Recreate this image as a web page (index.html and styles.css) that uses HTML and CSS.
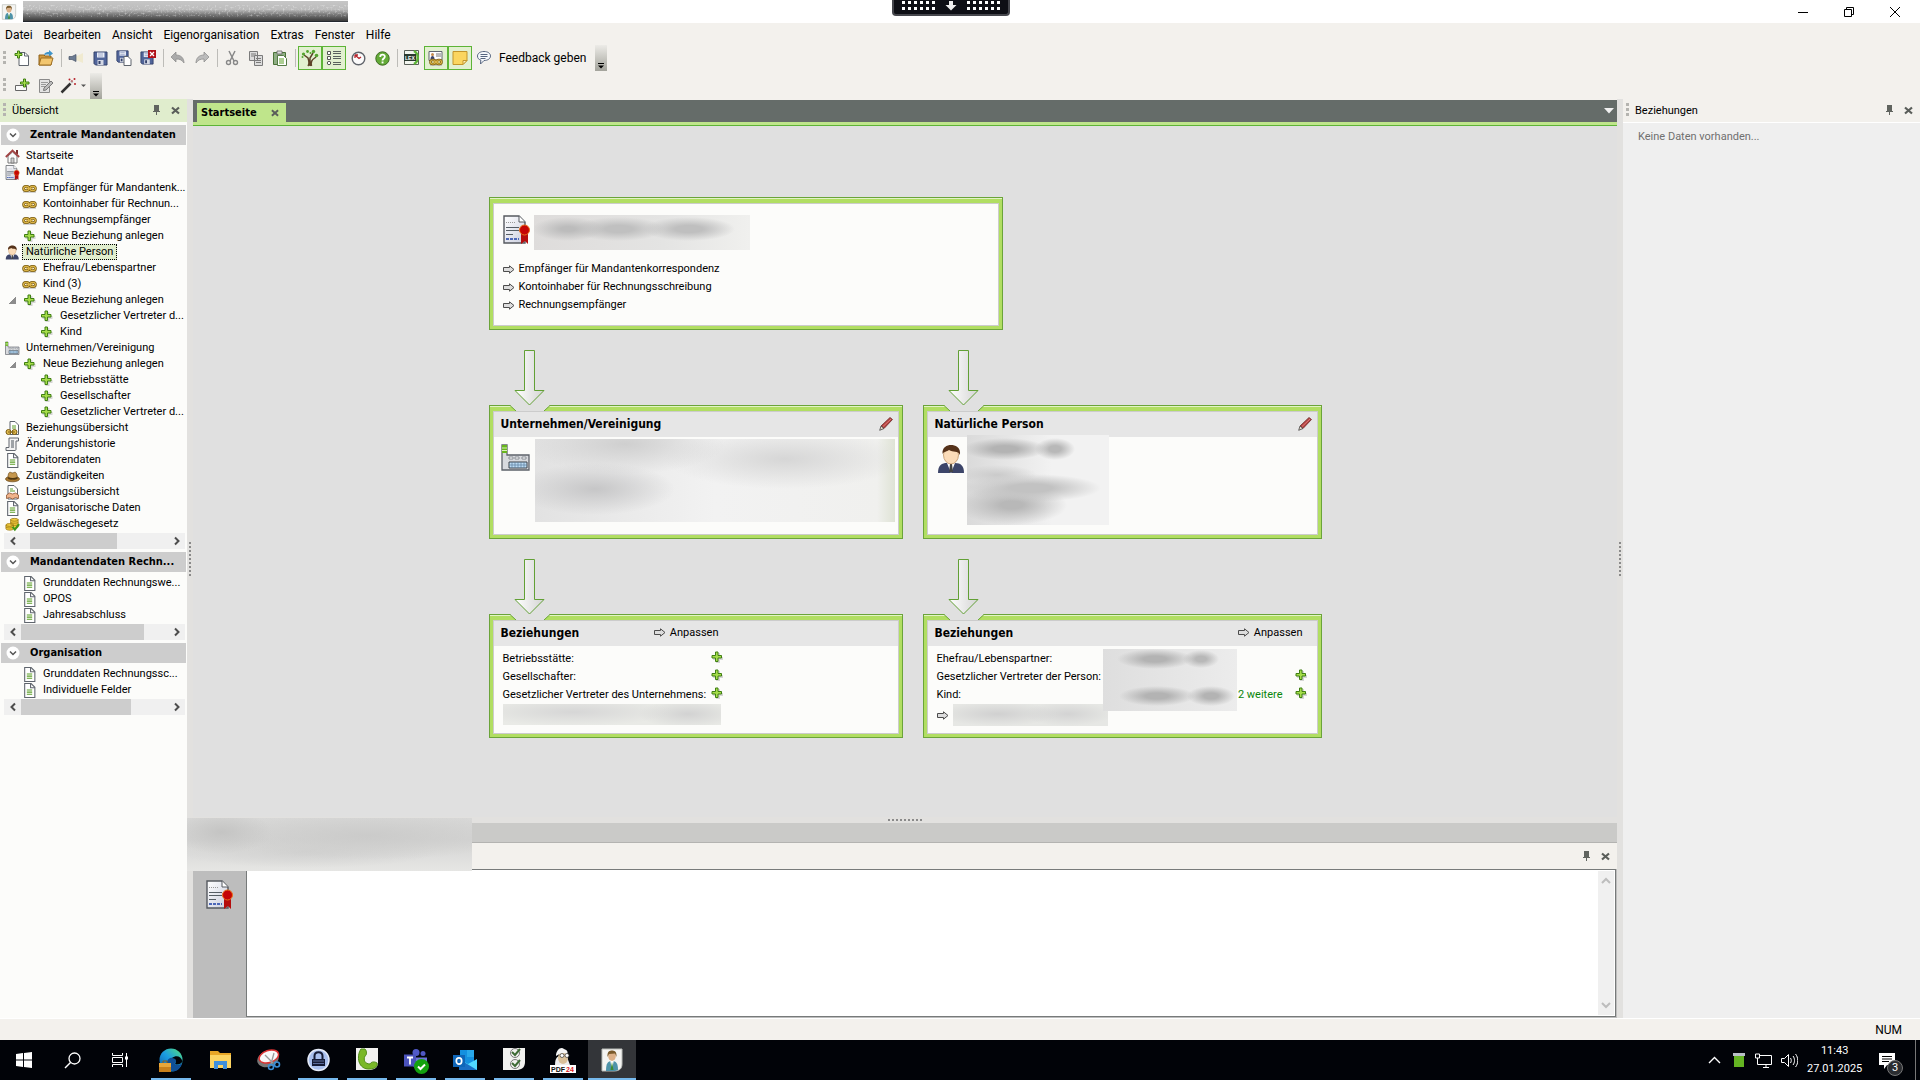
FILE: index.html
```html
<!DOCTYPE html>
<html lang="de">
<head>
<meta charset="utf-8">
<title>Zentrale Mandantendaten</title>
<link rel="stylesheet" href="styles.css">
</head>
<body>
<svg class="sprite" aria-hidden="true">
  <defs>
    <linearGradient id="g-paper" x1="0" y1="0" x2="1" y2="1"><stop offset="0" stop-color="#fff"/><stop offset="1" stop-color="#c9cddd"/></linearGradient>
    <linearGradient id="g-arrow" x1="0" x2="1"><stop offset="0" stop-color="#fff"/><stop offset="1" stop-color="#d4d4d4"/></linearGradient>
    <linearGradient id="g-edge" x1="0" y1="1" x2="1" y2="0"><stop offset="0" stop-color="#0c59a4"/><stop offset=".5" stop-color="#1b9de2"/><stop offset="1" stop-color="#54e07a"/></linearGradient>
  </defs>
  <symbol id="plus" viewBox="0 0 12 12"><path d="M5 2h4v4h3v3H9v3H5V9H2V6h3z" fill="#bbb" opacity=".6"/><path d="M4.500 1h2.500v3.500h3.500V7H7v3.500H4.500V7H1V4.500h3.500z" fill="#a6dd4a" stroke="#3f7f12"/></symbol>
  <symbol id="chain" viewBox="0 0 14 8"><path d="M1 7.500h12" stroke="#bbb" stroke-width=".8"/><g fill="none" stroke="#7a5c12" stroke-width="2.600"><rect x="1.500" y="2" width="5" height="4" rx="2"/><rect x="7.500" y="2" width="5" height="4" rx="2"/></g><g fill="none" stroke="#dcb548" stroke-width="1.200"><rect x="1.500" y="2" width="5" height="4" rx="2"/><rect x="7.500" y="2" width="5" height="4" rx="2"/><path d="M4 4h6"/></g></symbol>
  <symbol id="doc" viewBox="0 0 11 14"><path d="M1 .5h6l3.500 3.500v9.500H1z" fill="#fff" stroke="#5f656d"/><path d="M6.500.5v4h4" fill="none" stroke="#5f656d"/><path d="M3 6.500h5M3 8.500h5M3 10.500h5" stroke="#5b9e27"/></symbol>
  <symbol id="cert" viewBox="0 0 27 29"><path d="M1 1h15l6 6v21H1z" fill="url(#g-paper)" stroke="#55595f" stroke-width="1.400"/><path d="M16 1v6h6" fill="#fff" stroke="#55595f"/><path d="M3 7.500h9" stroke="#999" stroke-dasharray="1 1"/><path d="M3 12.500h13M3 15.500h13M3 19.500h7" stroke="#555d64" stroke-width="1.200"/><path d="M3 24h13" stroke="#4c67b8" stroke-width="2" stroke-dasharray="3 1"/><path d="M18 18h7v11l-3-3-4 3z" fill="#b50d0d"/><circle cx="21.500" cy="15" r="5" fill="#c50505" stroke="#e8711a"/></symbol>
  <symbol id="house" viewBox="0 0 15 15"><path d="M3 7v7h9V7L7.500 3z" fill="#fafafa" stroke="#777"/><path d="M11 1h2v4h-2z" fill="#7b2d2d"/><path d="M.8 8L7.500 1.500 14.200 8" fill="none" stroke="#a24444" stroke-width="1.800"/><path d="M6 9h3v5H6z" fill="#ccc" stroke="#666" stroke-width=".7"/></symbol>
  <symbol id="person" viewBox="0 0 29 30"><path d="M1 29c0-8 4-10 9-10h8c6 0 9 3 9 10z" fill="#3d4569"/><path d="M10 19h8l-4 10z" fill="#fff"/><path d="M13 20h2l1 8h-4z" fill="#444"/><ellipse cx="14" cy="11" rx="7.500" ry="9" fill="#fbdcb9" stroke="#a9733c" stroke-width=".6"/><path d="M5.500 10C5 3 10 1 14 1s10 2 9 10c-2-5-7-2-11-5-2 2-5 1-6.500 4z" fill="#55321a"/></symbol>
  <symbol id="factory" viewBox="0 0 30 28"><path d="M1 1h5v10h22v15H1z" fill="#d8dade" stroke="#5c6169" stroke-width="1.300"/><path d="M1 1h5v8H1z" fill="#67b51c"/><path d="M1 4h5M1 6.500h5" stroke="#d9f2b8"/><path d="M8 13h4v2H8zM14 13h4v2h-4zM21 13h4v2h-4z" fill="#fff" stroke="#686d75" stroke-width=".7"/><path d="M8 18h18v6H8z" fill="#bcdcf5" stroke="#3d434b"/><path d="M11 18v6M14 18v6M17 18v6M20 18v6M23 18v6M8 21h18" stroke="#5d7f9d" stroke-width=".7"/></symbol>
  <symbol id="docchain" viewBox="0 0 15 15"><path d="M5 .5h5l3.500 3.500v9.500H5z" fill="#fff" stroke="#5f656d"/><path d="M7 5h4M7 7h4" stroke="#5b9e27"/><g fill="#e2bc4e" stroke="#7a5c12"><circle cx="3.500" cy="11" r="2.500"/><circle cx="9.500" cy="11" r="2.500"/><path d="M3 11h7"/></g></symbol>
  <symbol id="scroll" viewBox="0 0 15 15"><path d="M4 1h9.500v3H11v8.500c0 1-1 1-1 1H1v-3h3z" fill="#f3f3f3" stroke="#62676e"/><path d="M6 4h3M6 6h3M6 8h3M6 10h3" stroke="#4a525b"/></symbol>
  <symbol id="hat" viewBox="0 0 15 12"><ellipse cx="7.500" cy="8.500" rx="7" ry="2.800" fill="#a8782f" stroke="#6c4814" stroke-width=".7"/><path d="M3 8c0-5 1-7 3-6 1 .6 2 .6 3 0 2-1 3 1 3.500 6-3 1.500-7 1.500-9.500 0z" fill="#c5974d" stroke="#6c4814" stroke-width=".7"/><path d="M3.200 6.500c3 1.200 6 1.200 9 0v1.700c-3 1.200-6 1.200-9 0z" fill="#4f3711"/></symbol>
  <symbol id="dochands" viewBox="0 0 15 15"><path d="M3 .5h6l3.500 3.500v10H3z" fill="#fff" stroke="#5f656d"/><path d="M5 4h3M5 6h5" stroke="#5b9e27"/><path d="M1.500 13.500V10l3-2 3 1 3-1 3 2v3.500l-3-1-3 1.500-3-1.500z" fill="#f0b48b" stroke="#8e5632" stroke-width=".8"/></symbol>
  <symbol id="coins" viewBox="0 0 16 15"><g fill="#f2cc3d" stroke="#97740f" stroke-width=".8"><path d="M6 2v8c0 2 8 2 8 0V2z"/><ellipse cx="10" cy="2.500" rx="4" ry="1.500"/><path d="M1 8v4c0 2 8 2 8 0V8z"/><ellipse cx="5" cy="8" rx="4" ry="1.500"/><path d="M6 5c0 1.500 8 1.500 8 0M6 7.500c0 1 8 1.500 8 0M1 10c0 1.500 8 1.500 8 0" fill="none"/></g><path d="M8 10l2.500 3L15 7" fill="none" stroke="#3f9717" stroke-width="2.200"/></symbol>
  <symbol id="go" viewBox="0 0 12 9"><path d="M.5 2.500h6V.8L11 4.500 6.500 8.200V6.500h-6z" fill="#ddd" stroke="#4c4c4c"/></symbol>
  <symbol id="pencil" viewBox="0 0 15 15"><path d="M2 10L11 1.500l2.500 2L5 12.500z" fill="#b4403f" stroke="#6d2c2b" stroke-width=".8"/><path d="M2 10l3 2.500-4.300 1.800z" fill="#e8d9c8" stroke="#444" stroke-width=".8"/><path d="M4 10.500l8-7.500" stroke="#e58e8a" stroke-width=".8"/></symbol>
  <symbol id="pin" viewBox="0 0 9 11"><path d="M2 0h5v6h1v1H5v3H4V7H1V6h1z" fill="#60645f"/></symbol>
  <symbol id="close" viewBox="0 0 9 9"><path d="M1 1.500l7 6M8 1.500l-7 6" stroke="#5a5e5a" stroke-width="2.200"/></symbol>
  <symbol id="circle-down" viewBox="0 0 14 14"><circle cx="7" cy="7" r="6.500" fill="#fff"/><path d="M4 5.500l3 3 3-3" fill="none" stroke="#555" stroke-width="1.500"/></symbol>
  <symbol id="left" viewBox="0 0 8 10"><path d="M6 1.500L2.500 5 6 8.500" fill="none" stroke="#4d4d4d" stroke-width="2"/></symbol>
  <symbol id="right" viewBox="0 0 8 10"><path d="M2 1.500L5.500 5 2 8.500" fill="none" stroke="#4d4d4d" stroke-width="2"/></symbol>
  <symbol id="flow" viewBox="0 0 31 56"><path d="M10.500.5h10v40h9.500L15.500 55 1 40.500h9.500z" fill="url(#g-arrow)" stroke="#62a035"/></symbol>
  <symbol id="notch" viewBox="0 0 40 6"><path d="M0 0h40l-6 6H6z" fill="#e0e0e0"/><path d="M0 .5L6 6M40 .5L34 6" stroke="#6ba43a"/></symbol>
  <symbol id="overflow" viewBox="0 0 12 26"><path d="M3 18.500h6" stroke="#000"/><path d="M3 20.500h6l-3 3z"/></symbol>
  <symbol id="floppy" viewBox="0 0 15 15"><path d="M1 1h13v13H2.500L1 12.500z" fill="#51659a" stroke="#34426b"/><path d="M4 1.500h7.500v5H4z" fill="#e9edf6"/><path d="M5 3h5M5 5h5" stroke="#8d9ac0" stroke-width=".8"/><path d="M4.500 9h6v5h-6z" fill="#d4d8e4"/><path d="M5.500 10h2v3h-2z" fill="#34426b"/></symbol>
  <symbol id="advisor" viewBox="0 0 22 24"><path d="M1 1h20v15c0 5-3 7-8 7H1z" fill="#f4f4f2" stroke="#b9bcb8"/><path d="M5 23c0-8 2-10 6-10s6 2 6 9c-2 1-4 1-5 1z" fill="#4f93a9"/><path d="M9 12h4l-2 9z" fill="#fff"/><path d="M11 14l1.500 8h-3z" fill="#3e8b2e"/><ellipse cx="11" cy="8" rx="3.800" ry="5" fill="#dcb088"/><path d="M6.500 9C6 3 9 2.500 11 2.500S16 3 15.500 9L14 5.500 8 6z" fill="#7a5a2b"/></symbol>
</svg>

<header class="titlebar">
  <svg class="app-icon"><use href="#advisor"/></svg>
  <svg class="title-mask" aria-hidden="true" preserveAspectRatio="none">
    <defs>
      <linearGradient id="g-mask" x1="0" y1="0" x2="0" y2="1"><stop offset="0" stop-color="#c6c6c6"/><stop offset=".4" stop-color="#bcbcbc"/><stop offset=".65" stop-color="#777"/><stop offset=".95" stop-color="#3a3a3a"/><stop offset="1" stop-color="#0c1420"/></linearGradient>
      <filter id="f-noise"><feTurbulence type="fractalNoise" baseFrequency=".5" numOctaves="2"/><feColorMatrix values="0 0 0 0 1  0 0 0 0 1  0 0 0 0 1  3 0 0 0 -1.500"/></filter>
    </defs>
    <rect width="100%" height="100%" fill="url(#g-mask)"/>
    <rect width="100%" height="10" y="5" filter="url(#f-noise)" opacity=".4"/>
  </svg>
  <div class="window-buttons">
    <button type="button" aria-label="Minimieren"><svg width="12" height="12"><path d="M1 6.500h10" stroke="#000"/></svg></button>
    <button type="button" aria-label="Verkleinern"><svg width="12" height="12"><path d="M1.500 3.500h7v7h-7zM3.500 3.500v-2h7v7h-2" fill="none" stroke="#000"/></svg></button>
    <button type="button" aria-label="Schließen"><svg width="12" height="12"><path d="M1 1l10 10M11 1L1 11" stroke="#000"/></svg></button>
  </div>
  <div class="session-pill"><i class="dots"></i><svg width="12" height="10"><path d="M4 0h4v4h3.500L6 9.500.5 4H4z" fill="#eee"/></svg><i class="dots"></i></div>
</header>

<nav class="menu" aria-label="Menü">
  <a href="#">Datei</a><a href="#">Bearbeiten</a><a href="#">Ansicht</a><a href="#">Eigenorganisation</a><a href="#">Extras</a><a href="#">Fenster</a><a href="#">Hilfe</a>
</nav>

<div class="toolbar">
  <i class="grip"></i>
  <button class="tool" type="button" aria-label="Neu"><svg width="16" height="16"><path d="M5 2.500h6l3.500 3.500v9.500H5z" fill="#fff" stroke="#5f656d"/><path d="M10.500 2.500V6h4" fill="none" stroke="#5f656d"/><path d="M3.500 1h2v2.500H8v2H5.500V8h-2V5.500H1v-2h2.500z" fill="#a6dd4a" stroke="#3f7f12"/></svg></button>
  <button class="tool" type="button" aria-label="Öffnen"><svg width="16" height="16"><path d="M1 5h5l1 1h6v9H1z" fill="#d39a3d" stroke="#8d601b"/><path d="M3 8h12l-2 7H1z" fill="#f2c66f" stroke="#9d6e22"/><path d="M6 5c1-3 3-3 5-3V0l4 3.500-4 3V4.500c-2 0-3 0-5 .5z" fill="#3f94c9"/></svg></button>
  <i class="sep"></i>
  <button class="tool" type="button" aria-label="Mitteilung"><svg width="16" height="16"><path d="M7 7l8-4v10L7 9.500z" fill="#f0ead0"/><path d="M1 6.500h3L8 4.500v7L4 9.500H1z" fill="#6c7b93" stroke="#495469" stroke-width=".7"/></svg></button>
  <button class="tool" type="button" aria-label="Speichern"><svg width="15" height="15"><use href="#floppy"/></svg></button>
  <button class="tool" type="button" aria-label="Speichern und neu"><svg width="16" height="16"><use href="#floppy" width="13" height="13"/><path d="M8 6.500h4l3 3v6H8z" fill="#fff" stroke="#5f656d"/></svg></button>
  <button class="tool" type="button" aria-label="Speichern und schließen"><svg width="16" height="16"><use href="#floppy" y="1" width="14" height="14"/><path d="M8 0h8v8H8z" fill="#b11018"/><path d="M10 2l4 4M14 2l-4 4" stroke="#fff" stroke-width="1.300"/></svg></button>
  <i class="sep"></i>
  <button class="tool" type="button" aria-label="Rückgängig"><svg width="16" height="16"><path d="M1 7l5-5v3c5 0 8 3 8 8-2-3-4-4-8-4v3z" fill="#aaa" stroke="#888" stroke-width=".7"/></svg></button>
  <button class="tool" type="button" aria-label="Wiederholen"><svg width="16" height="16"><path d="M15 7l-5-5v3c-5 0-8 3-8 8 2-3 4-4 8-4v3z" fill="#bbb" stroke="#888" stroke-width=".7"/></svg></button>
  <i class="sep"></i>
  <button class="tool" type="button" aria-label="Ausschneiden"><svg width="16" height="16"><path d="M5 1l5 10M11 1L6 11" stroke="#888" stroke-width="1.500"/><g fill="none" stroke="#888" stroke-width="1.400"><circle cx="4.500" cy="12.500" r="2"/><circle cx="11.500" cy="12.500" r="2"/></g></svg></button>
  <button class="tool" type="button" aria-label="Kopieren"><svg width="16" height="16"><g fill="#dcdcdc" stroke="#7b7b7b"><path d="M1.500 1.500h8v9h-8zM6.500 5.500h8v10h-8z"/></g><path d="M3 4h5M3 6h3M8 8.500h5M8 10.500h5M8 12.500h5" stroke="#7b7b7b"/></svg></button>
  <button class="tool" type="button" aria-label="Einfügen"><svg width="16" height="16"><path d="M1.500 2.500h12v12h-12z" fill="#8fae84" stroke="#4a7338"/><path d="M5 1h5v3H5z" fill="#ddd" stroke="#666" stroke-width=".8"/><path d="M5.500 5.500h6l3 3v7h-9z" fill="#fff" stroke="#557a46"/><path d="M7 9h5M7 11h5M7 13h5" stroke="#5b9e27"/></svg></button>
  <i class="sep"></i>
  <button class="tool on" type="button" aria-label="Übersichtsbaum"><svg width="18" height="18"><path d="M7 17c1.500-2 1-5 0-8L3 6M9 17V9l3-5M10.500 17c-1-4 0-6 4.500-9" stroke="#5c4327" stroke-width="1.500" fill="none"/><g fill="#53a32c"><circle cx="2.500" cy="5" r="1.600"/><circle cx="6.500" cy="2.500" r="1.400"/><circle cx="9.500" cy="4" r="1"/><circle cx="12.500" cy="2.500" r="1.700"/><circle cx="15.500" cy="6.500" r="1.800"/><circle cx="1.500" cy="8" r="1"/></g></svg></button>
  <button class="tool on" type="button" aria-label="Liste"><svg width="16" height="16"><path d="M1.500 1.500h3v3h-3zM1.500 6.500h3v3h-3z" fill="#fff" stroke="#555"/><circle cx="3" cy="13" r="1.700" fill="#fff" stroke="#555"/><path d="M7 1.500h8M7 3.500h8M7 6.500h8M7 8.500h8M7 12.500h8M7 14.500h8" stroke="#59625d"/></svg></button>
  <button class="tool" type="button" aria-label="Verlauf"><svg width="15" height="15"><circle cx="7.500" cy="7.500" r="6.300" fill="#fbfbfb" stroke="#60646b" stroke-width="1.400"/><path d="M4 4l4 3.500L10 6M4 4v3M4 4h3" fill="none" stroke="#b7222a" stroke-width="1.300"/></svg></button>
  <button class="tool" type="button" aria-label="Hilfe"><svg width="15" height="15"><circle cx="7.500" cy="7.500" r="6.700" fill="#63ab37" stroke="#3f6b24"/><path d="M5.200 6c0-3.200 4.800-3 4.600-.3C9.700 7.500 7.500 7.500 7.500 9.500" fill="none" stroke="#fff" stroke-width="1.800"/><path d="M6.600 10.500h1.900v1.900H6.600z" fill="#fff"/></svg></button>
  <i class="sep"></i>
  <button class="tool" type="button" aria-label="LEX"><svg width="16" height="16"><path d="M.5.5h14v14H.5z" fill="#f3f6f0" stroke="#5a6058"/><path d="M10 1c5 3 5 10 0 13" stroke="#5db437" stroke-width="2.500" fill="none"/><path d="M0 4h12v7H0z" fill="#2b3a2f"/><text class="lex" x="1" y="10">LEX</text></svg></button>
  <button class="tool on" type="button" aria-label="Beziehungen"><svg width="16" height="16"><path d="M1 1.500h13v9H1z" fill="#fff" stroke="#5f656d"/><circle cx="4.500" cy="4.500" r="1.500" fill="#c58c4c"/><path d="M2.500 9c0-4 4-4 4 0z" fill="#3d4569"/><path d="M8 4h5M8 6h5" stroke="#777"/><use href="#chain" x="1" y="8" width="14" height="8"/></svg></button>
  <button class="tool on" type="button" aria-label="Notiz"><svg width="16" height="16"><path d="M1 1.500h14v9l-4 4H1z" fill="#fbd65f" stroke="#c2952b"/><path d="M15 10.500h-4v4z" fill="#fff1b5" stroke="#c2952b"/></svg></button>
  <button class="tool-text" type="button"><svg width="16" height="16"><path d="M8 1.500c4 0 6.500 2 6.500 4.500S12 10.500 8 10.500L4.500 14l.3-4C2.500 9.500 1.500 8 1.500 6c0-2.500 2.500-4.500 6.500-4.500z" fill="#f6f9fd" stroke="#56657f"/><path d="M4.500 4.500h7M4.500 6.500h7M4.500 8.500h5" stroke="#56657f"/></svg>Feedback geben</button>
  <button class="overflow" type="button" aria-label="Weitere"><svg width="12" height="26"><use href="#overflow"/></svg></button>
</div>
<div class="toolbar second">
  <i class="grip"></i>
  <button class="tool" type="button" aria-label="Anlegen"><svg width="16" height="16"><path d="M1.500 7.500h11v5h-11z" fill="#fafafa" stroke="#666"/><path d="M9.500 1h2v3H15v2h-3.500v3h-2V6H6.500V4h3z" fill="#a6dd4a" stroke="#3f7f12"/></svg></button>
  <button class="tool" type="button" aria-label="Bearbeiten"><svg width="16" height="16"><path d="M1.500 1.500h10v13h-10z" fill="#e3e3e3" stroke="#8a8a8a"/><path d="M3 4.500h7M3 6.500h5M3 8.500h4" stroke="#999"/><path d="M5.500 12.500L6 10l7-7 2 2-7 7z" fill="#bbb" stroke="#777"/></svg></button>
  <button class="tool wide" type="button" aria-label="Assistent"><svg width="28" height="16"><path d="M1.500 14.500l9-9" stroke="#333" stroke-width="2.500"/><path d="M11 4.500l1.500-1.500" stroke="#bbb" stroke-width="2.500"/><g fill="#b7222a"><circle cx="9.500" cy="1.500" r="1"/><circle cx="14.500" cy="1" r="1"/><circle cx="15" cy="6" r="1"/><circle cx="12" cy="3" r=".8"/></g><path d="M21 6.500h5l-2.500 2.500z" fill="#555"/></svg></button>
  <button class="overflow" type="button" aria-label="Weitere"><svg width="12" height="26"><use href="#overflow"/></svg></button>
</div>

<div class="workspace">
  <aside class="overview">
    <div class="pane-head green"><i class="grip"></i><h2>Übersicht</h2><button type="button" aria-label="Anheften"><svg width="9" height="11"><use href="#pin"/></svg></button><button type="button" aria-label="Schließen"><svg width="9" height="9"><use href="#close"/></svg></button></div>

    <section class="group">
      <button class="group-head" type="button"><svg width="14" height="14"><use href="#circle-down"/></svg>Zentrale Mandantendaten</button>
      <ul class="tree">
        <li><svg><use href="#house"/></svg><a href="#">Startseite</a></li>
        <li><svg><use href="#cert"/></svg><a href="#">Mandat</a></li>
        <li class="l1"><svg><use href="#chain"/></svg><a href="#">Empfänger für Mandantenk...</a></li>
        <li class="l1"><svg><use href="#chain"/></svg><a href="#">Kontoinhaber für Rechnun...</a></li>
        <li class="l1"><svg><use href="#chain"/></svg><a href="#">Rechnungsempfänger</a></li>
        <li class="l1 add"><svg><use href="#plus"/></svg><a href="#">Neue Beziehung anlegen</a></li>
        <li><svg><use href="#person"/></svg><a class="selected" href="#">Natürliche Person</a></li>
        <li class="l1"><svg><use href="#chain"/></svg><a href="#">Ehefrau/Lebenspartner</a></li>
        <li class="l1"><svg><use href="#chain"/></svg><a href="#">Kind (3)</a></li>
        <li class="l1 add open"><svg><use href="#plus"/></svg><a href="#">Neue Beziehung anlegen</a></li>
        <li class="l2 add"><svg><use href="#plus"/></svg><a href="#">Gesetzlicher Vertreter d...</a></li>
        <li class="l2 add"><svg><use href="#plus"/></svg><a href="#">Kind</a></li>
        <li><svg><use href="#factory"/></svg><a href="#">Unternehmen/Vereinigung</a></li>
        <li class="l1 add open"><svg><use href="#plus"/></svg><a href="#">Neue Beziehung anlegen</a></li>
        <li class="l2 add"><svg><use href="#plus"/></svg><a href="#">Betriebsstätte</a></li>
        <li class="l2 add"><svg><use href="#plus"/></svg><a href="#">Gesellschafter</a></li>
        <li class="l2 add"><svg><use href="#plus"/></svg><a href="#">Gesetzlicher Vertreter d...</a></li>
        <li><svg><use href="#docchain"/></svg><a href="#">Beziehungsübersicht</a></li>
        <li><svg><use href="#scroll"/></svg><a href="#">Änderungshistorie</a></li>
        <li><svg><use href="#doc"/></svg><a href="#">Debitorendaten</a></li>
        <li><svg><use href="#hat"/></svg><a href="#">Zuständigkeiten</a></li>
        <li><svg><use href="#dochands"/></svg><a href="#">Leistungsübersicht</a></li>
        <li><svg><use href="#doc"/></svg><a href="#">Organisatorische Daten</a></li>
        <li><svg><use href="#coins"/></svg><a href="#">Geldwäschegesetz</a></li>
      </ul>
      <div class="hscroll"><button type="button" aria-label="Nach links"><svg width="8" height="10"><use href="#left"/></svg></button><div class="track"><div class="thumb first"></div></div><button type="button" aria-label="Nach rechts"><svg width="8" height="10"><use href="#right"/></svg></button></div>
    </section>

    <section class="group">
      <button class="group-head" type="button"><svg width="14" height="14"><use href="#circle-down"/></svg>Mandantendaten Rechn...</button>
      <ul class="tree">
        <li class="l1"><svg><use href="#doc"/></svg><a href="#">Grunddaten Rechnungswe...</a></li>
        <li class="l1"><svg><use href="#doc"/></svg><a href="#">OPOS</a></li>
        <li class="l1"><svg><use href="#doc"/></svg><a href="#">Jahresabschluss</a></li>
      </ul>
      <div class="hscroll"><button type="button" aria-label="Nach links"><svg width="8" height="10"><use href="#left"/></svg></button><div class="track"><div class="thumb second-thumb"></div></div><button type="button" aria-label="Nach rechts"><svg width="8" height="10"><use href="#right"/></svg></button></div>
    </section>

    <section class="group">
      <button class="group-head" type="button"><svg width="14" height="14"><use href="#circle-down"/></svg>Organisation</button>
      <ul class="tree">
        <li class="l1"><svg><use href="#doc"/></svg><a href="#">Grunddaten Rechnungssc...</a></li>
        <li class="l1"><svg><use href="#doc"/></svg><a href="#">Individuelle Felder</a></li>
      </ul>
      <div class="hscroll"><button type="button" aria-label="Nach links"><svg width="8" height="10"><use href="#left"/></svg></button><div class="track"><div class="thumb third-thumb"></div></div><button type="button" aria-label="Nach rechts"><svg width="8" height="10"><use href="#right"/></svg></button></div>
    </section>
  </aside>

  <div class="splitter"><i></i></div>

  <main class="center">
    <div class="tabs">
      <div class="tab"><a href="#">Startseite</a><button type="button" aria-label="Tab schließen"><svg width="8" height="8" viewBox="0 0 9 9"><use href="#close"/></svg></button></div>
      <button class="tab-list" type="button" aria-label="Tabliste"><svg width="10" height="6"><path d="M0 0h10L5 5.500z" fill="#f1f1f1"/></svg></button>
    </div>

    <div class="canvas">
      <div class="board">
        <article class="card mandate">
          <div class="card-body">
            <div class="who"><svg width="27" height="29"><use href="#cert"/></svg><span class="mask m1"></span></div>
            <a class="go" href="#"><svg><use href="#go"/></svg>Empfänger für Mandantenkorrespondenz</a>
            <a class="go" href="#"><svg><use href="#go"/></svg>Kontoinhaber für Rechnungsschreibung</a>
            <a class="go" href="#"><svg><use href="#go"/></svg>Rechnungsempfänger</a>
          </div>
        </article>

        <svg class="flow"><use href="#flow"/></svg>
        <svg class="flow"><use href="#flow"/></svg>

        <article class="card">
          <svg class="notch"><use href="#notch"/></svg>
          <header class="card-head"><h3>Unternehmen/Vereinigung</h3><button type="button" aria-label="Bearbeiten"><svg width="15" height="15"><use href="#pencil"/></svg></button></header>
          <div class="card-body entity"><svg width="30" height="28"><use href="#factory"/></svg><span class="mask m2"></span></div>
        </article>
        <article class="card">
          <svg class="notch"><use href="#notch"/></svg>
          <header class="card-head"><h3>Natürliche Person</h3><button type="button" aria-label="Bearbeiten"><svg width="15" height="15"><use href="#pencil"/></svg></button></header>
          <div class="card-body entity person"><svg width="29" height="30"><use href="#person"/></svg><span class="mask m3"></span></div>
        </article>

        <svg class="flow"><use href="#flow"/></svg>
        <svg class="flow"><use href="#flow"/></svg>

        <article class="card">
          <svg class="notch"><use href="#notch"/></svg>
          <header class="card-head"><div class="head-row narrow"><h3>Beziehungen</h3><a class="go" href="#"><svg><use href="#go"/></svg>Anpassen</a></div></header>
          <div class="card-body relations narrow">
            <div class="rel"><span>Betriebsstätte:</span><button type="button" aria-label="Betriebsstätte anlegen"><svg><use href="#plus"/></svg></button></div>
            <div class="rel"><span>Gesellschafter:</span><button type="button" aria-label="Gesellschafter anlegen"><svg><use href="#plus"/></svg></button></div>
            <div class="rel"><span>Gesetzlicher Vertreter des Unternehmens:</span><button type="button" aria-label="Vertreter anlegen"><svg><use href="#plus"/></svg></button></div>
            <span class="mask m4"></span>
          </div>
        </article>
        <article class="card">
          <svg class="notch"><use href="#notch"/></svg>
          <header class="card-head"><div class="head-row"><h3>Beziehungen</h3><a class="go" href="#"><svg><use href="#go"/></svg>Anpassen</a></div></header>
          <div class="card-body relations">
            <div class="rel"><span>Ehefrau/Lebenspartner:</span></div>
            <div class="rel"><span>Gesetzlicher Vertreter der Person:</span><button type="button" aria-label="Vertreter anlegen"><svg><use href="#plus"/></svg></button></div>
            <div class="rel"><span>Kind:</span><a class="more" href="#">2 weitere</a><button type="button" aria-label="Kind anlegen"><svg><use href="#plus"/></svg></button></div>
            <a class="go hidden-name" href="#" aria-label="Beziehung"><svg><use href="#go"/></svg><span class="mask m6"></span></a>
            <span class="mask m5"></span>
          </div>
        </article>
      </div>
    </div>

    <div class="hsplitter"><i></i></div>
    <section class="notes">
      <div class="notes-bar"></div>
      <div class="pane-head"><button type="button" aria-label="Anheften"><svg width="9" height="11"><use href="#pin"/></svg></button><button type="button" aria-label="Schließen"><svg width="9" height="9"><use href="#close"/></svg></button></div>
      <div class="notes-body">
        <div class="notes-side"><svg width="27" height="29"><use href="#cert"/></svg></div>
        <div class="notes-field">
          <textarea aria-label="Notiz"></textarea>
          <div class="vscroll"><svg width="10" height="8"><path d="M1 6l4-4 4 4" fill="none" stroke="#bdbdbd" stroke-width="2"/></svg><svg width="10" height="8"><path d="M1 2l4 4 4-4" fill="none" stroke="#bdbdbd" stroke-width="2"/></svg></div>
        </div>
      </div>
      <span class="mask m7"></span>
    </section>
  </main>

  <div class="splitter"><i></i></div>

  <aside class="relations-pane">
    <div class="pane-head"><i class="grip"></i><h2>Beziehungen</h2><button type="button" aria-label="Anheften"><svg width="9" height="11"><use href="#pin"/></svg></button><button type="button" aria-label="Schließen"><svg width="9" height="9"><use href="#close"/></svg></button></div>
    <p>Keine Daten vorhanden...</p>
  </aside>
</div>

<footer class="statusbar">NUM</footer>

<footer class="taskbar">
  <button class="sys" type="button" aria-label="Start"><svg width="16" height="16"><path d="M0 2l7-1v6.500H0zM8 .9L16 0v7.500H8zM0 8.500h7V15l-7-1zM8 8.500h8V16l-8-1z" fill="#fff"/></svg></button>
  <button class="sys" type="button" aria-label="Suche"><svg width="17" height="17"><circle cx="10.500" cy="6.500" r="5.500" fill="none" stroke="#fff" stroke-width="1.300"/><path d="M6.500 10.500L1 16" stroke="#fff" stroke-width="1.400"/></svg></button>
  <button class="sys" type="button" aria-label="Taskansicht"><svg width="16" height="16"><path d="M.5 1v2.500h10V1M.5 15v-2.500h10V15M.5 5.500h10v5H.5zM14.500 1v14" fill="none" stroke="#fff"/><path d="M13 4.500h3v3h-3z" fill="#fff"/></svg></button>
  <button class="task run" type="button" aria-label="Edge"><svg width="24" height="24"><circle cx="12" cy="12" r="11.500" fill="url(#g-edge)"/><path d="M8 15c0-6 8-7 9-2 0 2-2 2-1 3 3 2 7 0 7.500-2C22 20 18 24 14 23c-4-1-6-4-6-8z" fill="#0f4f96"/><path d="M13 10c4 0 5 4 3 5.500l1.500 1c3 0 5-1 6-3C22 8 17 7 13 10z" fill="#000308"/><path d="M0 15h12v9H0z" fill="#c8801b"/><path d="M0 15h12v4H0z" fill="#e7a63a"/><path d="M4 15v-2h4v2" fill="none" stroke="#8d5810"/></svg></button>
  <button class="task" type="button" aria-label="Explorer"><svg width="23" height="20"><path d="M1 1h8l2 2h11v15H1z" fill="#e8a626"/><path d="M1 5h21v13H1z" fill="#fcd462"/><path d="M5 11h13v8h-4v-4H9v4H5z" fill="#3f8fdc"/></svg></button>
  <button class="task" type="button" aria-label="Snipping Tool"><svg width="24" height="22"><ellipse cx="11" cy="10" rx="11" ry="8" transform="rotate(-18 11 10)" fill="#777"/><ellipse cx="12" cy="7.500" rx="10" ry="6" transform="rotate(-18 12 8)" fill="#f8f8f8" stroke="#d33" stroke-width="1.500"/><path d="M8 6l8 8M17 4l-3 11" stroke="#999" stroke-width="1.300"/><g fill="none" stroke="#3b8ed6" stroke-width="1.600"><circle cx="14" cy="18" r="2.500"/><circle cx="20" cy="15.500" r="2.500"/></g></svg></button>
  <button class="task run" type="button" aria-label="Passwort"><svg width="23" height="24"><circle cx="11.500" cy="12" r="10.500" fill="#a9c0ee" stroke="#e5ebf8" stroke-width="1.500"/><path d="M7.500 11V8c0-5 8-5 8 0v3" fill="none" stroke="#151b35" stroke-width="2"/><path d="M5 11h13v7H5z" fill="#151b35"/><path d="M6 13h11M6 15.500h11" stroke="#6c80b5" stroke-width=".8"/></svg></button>
  <button class="task run" type="button" aria-label="Telefonie"><svg width="22" height="24"><path d="M0 0h22v14c0 6-4 8-9 8H0z" fill="#f2f2f0"/><path d="M5 1C0 8 2 22 14 21c5 0 8-3 7-6-3-2-6-1-7 1-5 0-7-4-5-8 2-1 2-5 0-7z" fill="#7ab828" stroke="#4f8b17"/></svg></button>
  <button class="task run" type="button" aria-label="Teams"><svg width="27" height="27" viewBox="-1 -1 27 26"><circle cx="12" cy="4" r="3.500" fill="#5059c9"/><circle cx="19" cy="5" r="2.500" fill="#4f57c3"/><path d="M9 9h14v8c0 4-12 6-14 0z" fill="#6b73d6"/><path d="M0 6h12v12H0z" fill="#4b53bc"/><path d="M3 9h6M6 9v7" stroke="#fff" stroke-width="1.800"/><circle cx="17.500" cy="18" r="7.500" fill="#13a10e"/><path d="M14 18l2.500 2.500L21 16" fill="none" stroke="#fff" stroke-width="2"/></svg></button>
  <button class="task run" type="button" aria-label="Outlook"><svg width="24" height="22"><path d="M7 1h14v14H7z" fill="#1490df"/><path d="M14 1h7v7h-7z" fill="#28a8ea"/><path d="M6 10l9 5 9-5v11H6z" fill="#50d9ff"/><path d="M6 10l18 11H6z" fill="#1a6fc4"/><path d="M0 6h12v12H0z" fill="#0f66b8"/><ellipse cx="6" cy="12" rx="2.700" ry="3.200" fill="none" stroke="#fff" stroke-width="1.700"/></svg></button>
  <button class="task run" type="button" aria-label="Aufgaben"><svg width="22" height="24"><path d="M0 0h22v14c0 6-4 8-9 8H0z" fill="#f2f2f0"/><g fill="none" stroke="#777"><circle cx="12" cy="5" r="4.500"/><circle cx="12" cy="16" r="4.500"/></g><path d="M9 4l3 3 5-6M9 15l3 3 5-6" fill="none" stroke="#3d6a35" stroke-width="2"/></svg></button>
  <button class="task run" type="button" aria-label="PDF24"><svg width="26" height="26"><path d="M5 18c0-8 3-9 6-9l6 1 3 8z" fill="#eee"/><ellipse cx="13" cy="11" rx="5" ry="6" fill="#d9c09a"/><path d="M6 9c0-6 5-10 8-7 4 1 4 4 3 5-4-2-6-1-11 2z" fill="#f4f4f4"/><circle cx="12" cy="8.500" r="2" fill="#fff" stroke="#333" stroke-width=".7"/><circle cx="17" cy="8.500" r="2" fill="#fff" stroke="#333" stroke-width=".7"/><path d="M0 18h26v8H0z" fill="#fff"/><text class="pdf" x="1" y="25">PDF</text><text class="pdf red" x="16" y="25">24</text></svg></button>
  <button class="task run active" type="button" aria-label="Mandantendaten"><svg width="22" height="24"><use href="#advisor"/></svg></button>

  <div class="tray">
    <button class="more-icons" type="button" aria-label="Ausgeblendete Symbole"><svg width="13" height="8"><path d="M1 7l5.500-5.500L12 7" fill="none" stroke="#fff" stroke-width="1.400"/></svg></button>
    <button type="button" aria-label="Lizenz"><svg width="14" height="16"><path d="M2 4h10v11H2z" fill="#64b422"/><path d="M1 1h12v3H1z" fill="#b9bfc6"/></svg></button>
    <button type="button" aria-label="Netzwerk"><svg width="17" height="15"><path d="M4 2.500h12.500v9H5M8 14.500h6M11 11.500v3M.5 1v4h4V1zM2.500 5v6.500H5" fill="none" stroke="#fff"/></svg></button>
    <button type="button" aria-label="Lautstärke"><svg width="17" height="15"><path d="M.5 5.500h3l4-4v12l-4-4h-3z" fill="none" stroke="#fff"/><path d="M9.500 5c1 1.500 1 3.500 0 5M12 3c2 2.500 2 6.500 0 9M14.500 1c3 3.500 3 9.500 0 13" fill="none" stroke="#fff"/></svg></button>
    <time class="clock" datetime="2025-01-27T11:43"><span>11:43</span><span>27.01.2025</span></time>
    <button class="bell" type="button" aria-label="3 Benachrichtigungen"><svg width="17" height="17"><path d="M0 0h16v12H8l-3 4v-4H0z" fill="#fff"/><path d="M3 3.500h10M3 6h10M3 8.500h7" stroke="#000"/></svg><b>3</b></button>
    <i class="desk"></i>
  </div>
</footer>
</body>
</html>
```
FILE: styles.css
```css
* { box-sizing: border-box; }

:root {
  --chrome: #f3f1ed;
  --pale: #fcfcfa;
  --ui: Roboto, "Open Sans", sans-serif;
  --head: "DejaVu Sans Condensed", "DejaVu Sans", sans-serif;
}

body {
  margin: 0;
  min-height: 100vh;
  display: flex;
  flex-direction: column;
  background: var(--chrome);
  color: #000;
  font: 11px/16px var(--ui);
}

button {
  margin: 0;
  padding: 0;
  border: 0;
  background: none;
  color: inherit;
  font: inherit;
}

a { color: inherit; text-decoration: none; }
h2, h3, p, ul { margin: 0; padding: 0; }
svg { display: block; flex: none; }
.sprite { position: absolute; width: 0; height: 0; }

/* Title bar */
.titlebar {
  position: relative;
  display: flex;
  align-items: center;
  height: 23px;
  padding-left: 1px;
  background: #fff;
}
.app-icon { width: 16px; height: 16px; margin-right: 6px; }
.title-mask { width: 325px; height: 21px; }
.window-buttons { display: flex; margin-left: auto; padding-right: 2px; }
.window-buttons button { width: 46px; height: 20px; display: grid; place-items: center; }
.session-pill {
  position: absolute;
  top: 0;
  left: 50%;
  width: 118px;
  height: 16px;
  margin-left: -68px;
  padding-bottom: 3px;
  display: flex;
  align-items: center;
  justify-content: center;
  gap: 10px;
  background: #0e0f15;
  border: 2px solid #45464c;
  border-top: 0;
  border-radius: 0 0 4px 4px;
}
.dots {
  width: 33px;
  height: 9px;
  background: repeating-linear-gradient(90deg, #fff 0 3px, transparent 3px 6px);
  position: relative;
}
.dots::after { content: ""; position: absolute; inset: 3px 0; background: #0e0f15; }

/* Menu and toolbars */
.menu {
  display: flex;
  gap: 11px;
  height: 22px;
  padding: 4px 5px 0;
  font-size: 12px;
}
.toolbar { display: flex; align-items: center; height: 26px; padding-left: 3px; }
.second { height: 28px; padding-top: 1px; }
.grip {
  width: 3px;
  height: 15px;
  margin-right: 4px;
  background: repeating-linear-gradient(#b5b4b0 0 3px, transparent 3px 5px);
}
.tool { width: 24px; height: 24px; display: grid; place-items: center; }
.wide { width: 32px; }
.on { background: #e2f0d0; border: 1px solid #5db437; }
.sep { width: 1px; height: 18px; margin: 0 2px 0 3px; background: #bdbcb8; }
.tool-text {
  display: flex;
  align-items: center;
  gap: 7px;
  padding: 0 9px 0 4px;
  font-size: 12px;
}
.overflow { width: 12px; height: 26px; background: linear-gradient(#ecebe7, #a3a39b); }
.lex { font: bold 5px "Liberation Sans", sans-serif; fill: #fff; }

/* Workspace */
.workspace { flex: 1; display: flex; border-bottom: 1px solid #fff; }
.splitter {
  width: 6px;
  flex: none;
  display: grid;
  place-items: center;
  background: #e2e1df;
}
.splitter i { width: 2px; height: 34px; background: repeating-linear-gradient(#8a8a8a 0 2px, transparent 2px 4px); }

.pane-head {
  display: flex;
  align-items: center;
  height: 23px;
  padding: 0 7px 0 3px;
  gap: 10px;
  background: var(--chrome);
}
.pane-head h2 { flex: 1; font-size: 11px; font-weight: normal; }
.pane-head .grip { margin-right: -4px; }
.green { background: #e0edcd; }

.overview { width: 187px; flex: none; background: var(--pale); }
.group { padding: 3px 1px 0; }
.group-head {
  display: flex;
  align-items: center;
  gap: 10px;
  width: 100%;
  height: 20px;
  padding-left: 5px;
  background: #cdcdcd;
  font: bold 11px/20px var(--head);
}
.tree { list-style: none; padding: 3px 0 1px; }
.tree li { display: flex; align-items: center; height: 16px; padding-left: 4px; white-space: nowrap; }
.tree svg { width: 15px; height: 15px; margin-right: 2px; }
.tree .l1 { padding-left: 21px; }
.tree .l2 { padding-left: 38px; }
.tree .add svg { height: 12px; }
.tree .open { position: relative; }
.tree .open::before {
  content: "";
  position: absolute;
  left: 8px;
  top: 5px;
  width: 7px;
  height: 7px;
  background: linear-gradient(135deg, transparent 50%, #8c8c8c 50%);
}
.tree a { line-height: 14px; padding: 0 3px; border: 1px dotted transparent; }
.tree .selected { background: #e0edcd; border-color: #000; }

.hscroll { display: flex; align-items: center; height: 16px; margin: 0 1px 0 3px; background: #f0f0f0; }
.hscroll button { width: 17px; display: grid; place-items: center; }
.track { flex: 1; display: flex; height: 16px; }
.thumb { background: #cdcdcd; }
.first { width: 59%; margin-left: 6%; }
.second-thumb { width: 84%; }
.third-thumb { width: 75%; }

/* Document area */
.center { flex: 1; min-width: 0; display: flex; flex-direction: column; }
.tabs {
  display: flex;
  align-items: flex-end;
  height: 27px;
  margin-top: 1px;
  padding: 0 3px 0 4px;
  background: linear-gradient(#656c69 22px, #bfe58b 22px 25px, #5db437 25px 26px, #e0e0e0 26px);
}
.tab {
  display: flex;
  align-items: center;
  gap: 14px;
  height: 19px;
  margin-bottom: 5px;
  padding: 0 7px 0 4px;
  background: #bfe58b;
  font: bold 11px/18px var(--head);
}
.tab-list { margin: 0 0 13px auto; }

.canvas { flex: 1; display: flex; justify-content: center; align-items: flex-start; padding: 70px 20px; background: #e0e0e0; }
.board { display: grid; grid-template-columns: 414px 399px; column-gap: 20px; }
.flow { width: 31px; height: 56px; margin: 20px 0 -1px 25px; position: relative; z-index: 1; }

.card {
  position: relative;
  padding: 5px 3px 3px;
  border: 1px solid #6ba43a;
  background: #b1de62;
  box-shadow: inset 0 1px #e2f3c6;
}
.mandate { grid-column: 1 / 3; width: 514px; min-height: 133px; }
.notch { position: absolute; left: 20px; top: -1px; width: 40px; height: 6px; }
.card-head {
  display: flex;
  align-items: center;
  height: 26px;
  padding: 0 4px 2px 7px;
  border: 1px solid #ccc;
  border-bottom: 0;
  background: #e6e6e6;
}
.card-head h3 { flex: 1; font: bold 12px/20px var(--head); }
.head-row { flex: 1; display: flex; align-items: center; padding-right: 10px; }
.head-row.narrow { flex: none; width: 228px; }
.card-body { position: relative; padding: 11px 9px; min-height: 98px; border: 1px solid #ccc; background: var(--pale); }
.card-head + .card-body { border-top: 0; }
.mandate .card-body { min-height: 123px; }

.who { display: flex; gap: 4px; margin-bottom: 10px; }
.go { display: flex; align-items: center; line-height: 18px; }
.go svg { width: 12px; height: 9px; margin-right: 4px; }

.entity { display: flex; gap: 4px; padding: 2px 3px 0 7px; }
.entity svg { margin-top: 5px; }
.person { padding-left: 9px; gap: 1px; }

.relations { padding: 4px 10px 0 9px; min-height: 88px; }
.relations.narrow { padding-right: 175px; }
.rel { display: flex; height: 18px; align-items: center; white-space: nowrap; }
.rel span { flex: 1; }
.rel svg { width: 12px; height: 12px; margin-bottom: 4px; }
.more { margin-right: 12px; color: #0a850a; }
.hidden-name { height: 22px; }

/* Concealed names */
.mask { display: block; background-color: #eee; }
.m1 {
  width: 216px; height: 35px;
  background: radial-gradient(ellipse 36px 12px at 34px 14px, #bcbcbc 20%, transparent), radial-gradient(ellipse 46px 12px at 85px 14px, #c0c0c0 30%, transparent), radial-gradient(ellipse 46px 12px at 155px 14px, #bfbfbf 30%, transparent), linear-gradient(90deg, #dedcdb, #e4e4e3 60%, #f0f0ee);
}
.m2 {
  flex: 1; height: 83px;
  background: radial-gradient(ellipse 80px 26px at 60px 50px, #c6c6c7, transparent), radial-gradient(ellipse 100px 30px at 90px 5px, #cfcfcf, transparent), radial-gradient(ellipse 120px 30px at 250px 20px, #d6d6d6, transparent), linear-gradient(90deg, #e2e2e2, #f2f2f2 50%, #f0f0ee 95%, #dfe3d5);
}
.m3 {
  width: 142px; height: 90px; margin-top: -4px;
  background: radial-gradient(ellipse 42px 11px at 38px 14px, #b3b3b3 30%, transparent), radial-gradient(ellipse 20px 11px at 88px 14px, #b8b8b8 30%, transparent), radial-gradient(ellipse 40px 10px at 30px 40px, #cacaca, transparent), radial-gradient(ellipse 70px 14px at 64px 53px, #c2c2c2 30%, transparent), radial-gradient(ellipse 55px 20px at 45px 70px, #b8b8b8 20%, transparent), linear-gradient(90deg, #dadada, #f2f2f2 60%);
}
.m4 {
  width: 218px; height: 21px;
  background: radial-gradient(ellipse 100px 14px at 70px 8px, #d6d6d6, transparent), radial-gradient(ellipse 50px 14px at 185px 10px, #d2d2d2, transparent), #e9eae6;
}
.m5 {
  position: absolute; left: 175px; top: 3px; width: 134px; height: 62px;
  background: radial-gradient(ellipse 38px 10px at 52px 10px, #b3b3b3 30%, transparent), radial-gradient(ellipse 18px 9px at 98px 10px, #b8b8b8 30%, transparent), radial-gradient(ellipse 38px 10px at 54px 47px, #b3b3b3 30%, transparent), radial-gradient(ellipse 24px 10px at 108px 47px, #b3b3b3 30%, transparent), linear-gradient(90deg, #dedede, #ececec);
}
.m6 {
  width: 155px; height: 22px;
  background: radial-gradient(ellipse 60px 12px at 45px 10px, #d0d0d0, transparent), radial-gradient(ellipse 45px 12px at 115px 10px, #d3d3d3, transparent), #e6e7e4;
}
.m7 {
  position: absolute; left: -6px; top: -5px; width: 285px; height: 53px;
  background: radial-gradient(ellipse 50px 22px at 35px 14px, #c4c4c3, transparent), radial-gradient(ellipse 150px 24px at 180px 18px, #cbcbca, transparent), radial-gradient(ellipse 130px 16px at 120px 34px, #d2d2d1, transparent), linear-gradient(#d8d8d7, #d4d4d3 40%, #e6e6e4);
}

/* Notes pane */
.hsplitter { height: 6px; display: grid; place-items: center; background: #e2e1df; }
.hsplitter i { width: 34px; height: 2px; background: repeating-linear-gradient(90deg, #8a8a8a 0 2px, transparent 2px 4px); }
.notes { position: relative; }
.notes-bar { height: 20px; background: #cacac8; border-bottom: 1px solid #b3b3b1; }
.notes .pane-head { height: 26px; justify-content: flex-end; }
.notes-body { display: flex; height: 149px; background: #bdbdbd; padding: 0 1px 1px 0; }
.notes-side { width: 53px; padding: 11px 0 0 13px; }
.notes-field { flex: 1; display: flex; border: 1px solid #777a7a; background: #fff; }
.notes-field textarea { flex: 1; min-width: 0; margin: 0; padding: 4px; border: 0; outline: 0; resize: none; font: inherit; }
.vscroll {
  width: 16px;
  margin: 1px;
  padding: 6px 3px;
  display: flex;
  flex-direction: column;
  justify-content: space-between;
  background: #f0f0f0;
}

/* Right pane */
.relations-pane { width: 297px; flex: none; background: #efefef; }
.relations-pane .pane-head { height: 24px; border-bottom: 1px solid #fff; }
.relations-pane p { padding: 6px 15px; color: #707070; }

/* Status bar and taskbar */
.statusbar { height: 21px; padding: 3px 18px 0 0; text-align: right; font-size: 12px; }
.taskbar { display: flex; height: 40px; background: #010308; color: #fff; }
.sys { width: 48px; display: grid; place-items: center; }
.task { width: 48px; margin-right: 1px; display: grid; place-items: center; }
.sys + .task { margin-left: 3px; }
.run { background: linear-gradient(#76b9ed, #76b9ed) bottom / 40px 2px no-repeat; }
.active { background-color: #333539; background-size: 100% 2px; }
.pdf { font: bold 7px "Liberation Sans", sans-serif; fill: #111; }
.red { fill: #d22; }

.tray { display: flex; align-items: center; gap: 9px; margin-left: auto; }
.more-icons { margin-right: 2px; }
.clock { display: grid; width: 54px; justify-items: center; font: 11px/18px var(--ui); }
.bell { position: relative; margin: 0 3px 0 9px; width: 24px; height: 24px; padding-top: 2px; }
.bell b {
  position: absolute;
  right: 0;
  bottom: -4px;
  width: 16px;
  height: 16px;
  border: 1px solid #777;
  border-radius: 50%;
  background: #2b2d31;
  font: 11px/14px var(--ui);
}
.desk { width: 5px; height: 40px; border-left: 1px solid #777; }
```
